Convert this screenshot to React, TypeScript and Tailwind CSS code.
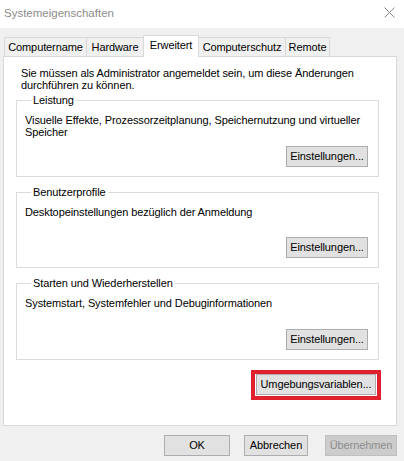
import React from "react";

const tabs = [
  { label: "Computername", w: "w-[83px]" },
  { label: "Hardware", w: "w-[58px]" },
  { label: "Erweitert", w: "w-[56px]", active: true },
  { label: "Computerschutz", w: "w-[88px]" },
  { label: "Remote", w: "w-[45px]" },
];

function WinButton({
  children,
  className = "",
  disabled = false,
}: {
  children: React.ReactNode;
  className?: string;
  disabled?: boolean;
}) {
  return (
    <button
      className={
        "h-[21px] border flex items-center justify-center text-[11px] leading-none " +
        (disabled
          ? "bg-[#cccccc] border-[#bfbfbf] text-[#8c8c8c] "
          : "bg-[#e1e1e1] border-[#adadad] text-[#000] ") +
        className
      }
    >
      {children}
    </button>
  );
}

function GroupBox({
  title,
  children,
  className = "",
}: {
  title: string;
  children: React.ReactNode;
  className?: string;
}) {
  return (
    <fieldset
      className={
        "border border-[#dcdcdc] pl-[8px] pr-[10px] pb-[9px] flex flex-col " +
        className
      }
    >
      <legend className="ml-[6px] px-[2px] text-[11px] leading-[14px]">
        {title}
      </legend>
      {children}
    </fieldset>
  );
}

export default function App() {
  return (
    <div
      className="w-[404px] h-[461px] bg-[#f0f0f0] flex flex-col text-[#000] tracking-[-0.1px]"
      style={{ fontFamily: '"Liberation Sans", Arial, sans-serif' }}
    >
      {/* title bar */}
      <div className="h-[28px] bg-white flex items-start justify-between pl-[4px] pr-[9px] pt-[6px]">
        <span className="text-[11.5px] leading-[14px] text-[#8c8c8c] tracking-normal">
          Systemeigenschaften
        </span>
        <svg width="11" height="11" viewBox="0 0 11 11" className="mt-[1px]">
          <path d="M0.5 0.5 L10.5 10.5 M10.5 0.5 L0.5 10.5" stroke="#8a8a8a" strokeWidth="1" />
        </svg>
      </div>

      {/* tabs */}
      <div className="flex items-end pl-[4px] mt-[7px] relative z-10">
        {tabs.map((t, i) => (
          <div
            key={t.label}
            className={
              "flex items-center justify-center text-[11px] border-t border-l border-r border-[#d9d9d9] " +
              t.w +
              (i > 0 ? " -ml-px" : "") +
              (t.active
                ? " h-[22px] bg-white -mb-px pb-[3px] relative z-10"
                : " h-[19px] bg-[#f0f0f0]")
            }
          >
            {t.label}
          </div>
        ))}
      </div>

      {/* panel */}
      <div className="ml-[3px] w-[394px] h-[370px] bg-white border border-[#d9d9d9] pt-[10px] pl-[12px] flex flex-col">
        <p className="pl-[5px] text-[11px] leading-[12px]">
          Sie müssen als Administrator angemeldet sein, um diese Änderungen
          <br />
          durchführen zu können.
        </p>

        <div className="w-[363px] flex flex-col">
          <GroupBox title="Leistung" className="mt-[2px]">
            <p className="pt-[7px] text-[11px] leading-[12px]">
              Visuelle Effekte, Prozessorzeitplanung, Speichernutzung und virtueller
              <br />
              Speicher
            </p>
            <div className="flex justify-end mt-[8px]">
              <WinButton className="w-[82px]">Einstellungen...</WinButton>
            </div>
          </GroupBox>

          <GroupBox title="Benutzerprofile" className="mt-[8px]">
            <p className="pt-[7px] text-[11px] leading-[12px]">
              Desktopeinstellungen bezüglich der Anmeldung
            </p>
            <div className="flex justify-end mt-[19px]">
              <WinButton className="w-[82px]">Einstellungen...</WinButton>
            </div>
          </GroupBox>

          <GroupBox title="Starten und Wiederherstellen" className="mt-[8px]">
            <p className="pt-[7px] text-[11px] leading-[12px]">
              Systemstart, Systemfehler und Debuginformationen
            </p>
            <div className="flex justify-end mt-[20px]">
              <WinButton className="w-[82px]">Einstellungen...</WinButton>
            </div>
          </GroupBox>
        </div>

        <div className="flex justify-end pr-[15px] mt-[10px]">
          <div className="border-[4px] border-[#e0202c] px-[1px] pt-0 pb-[1px]">
            <WinButton className="w-[120px]">Umgebungsvariablen...</WinButton>
          </div>
        </div>
      </div>

      {/* dialog buttons */}
      <div className="flex justify-end pr-[7px] mt-[9px] gap-[15px]">
        <WinButton className="w-[66px]">OK</WinButton>
        <WinButton className="w-[64px] -ml-[1px]">Abbrechen</WinButton>
        <WinButton className="w-[72px] ml-[2px]" disabled>
          Übernehmen
        </WinButton>
      </div>
    </div>
  );
}
